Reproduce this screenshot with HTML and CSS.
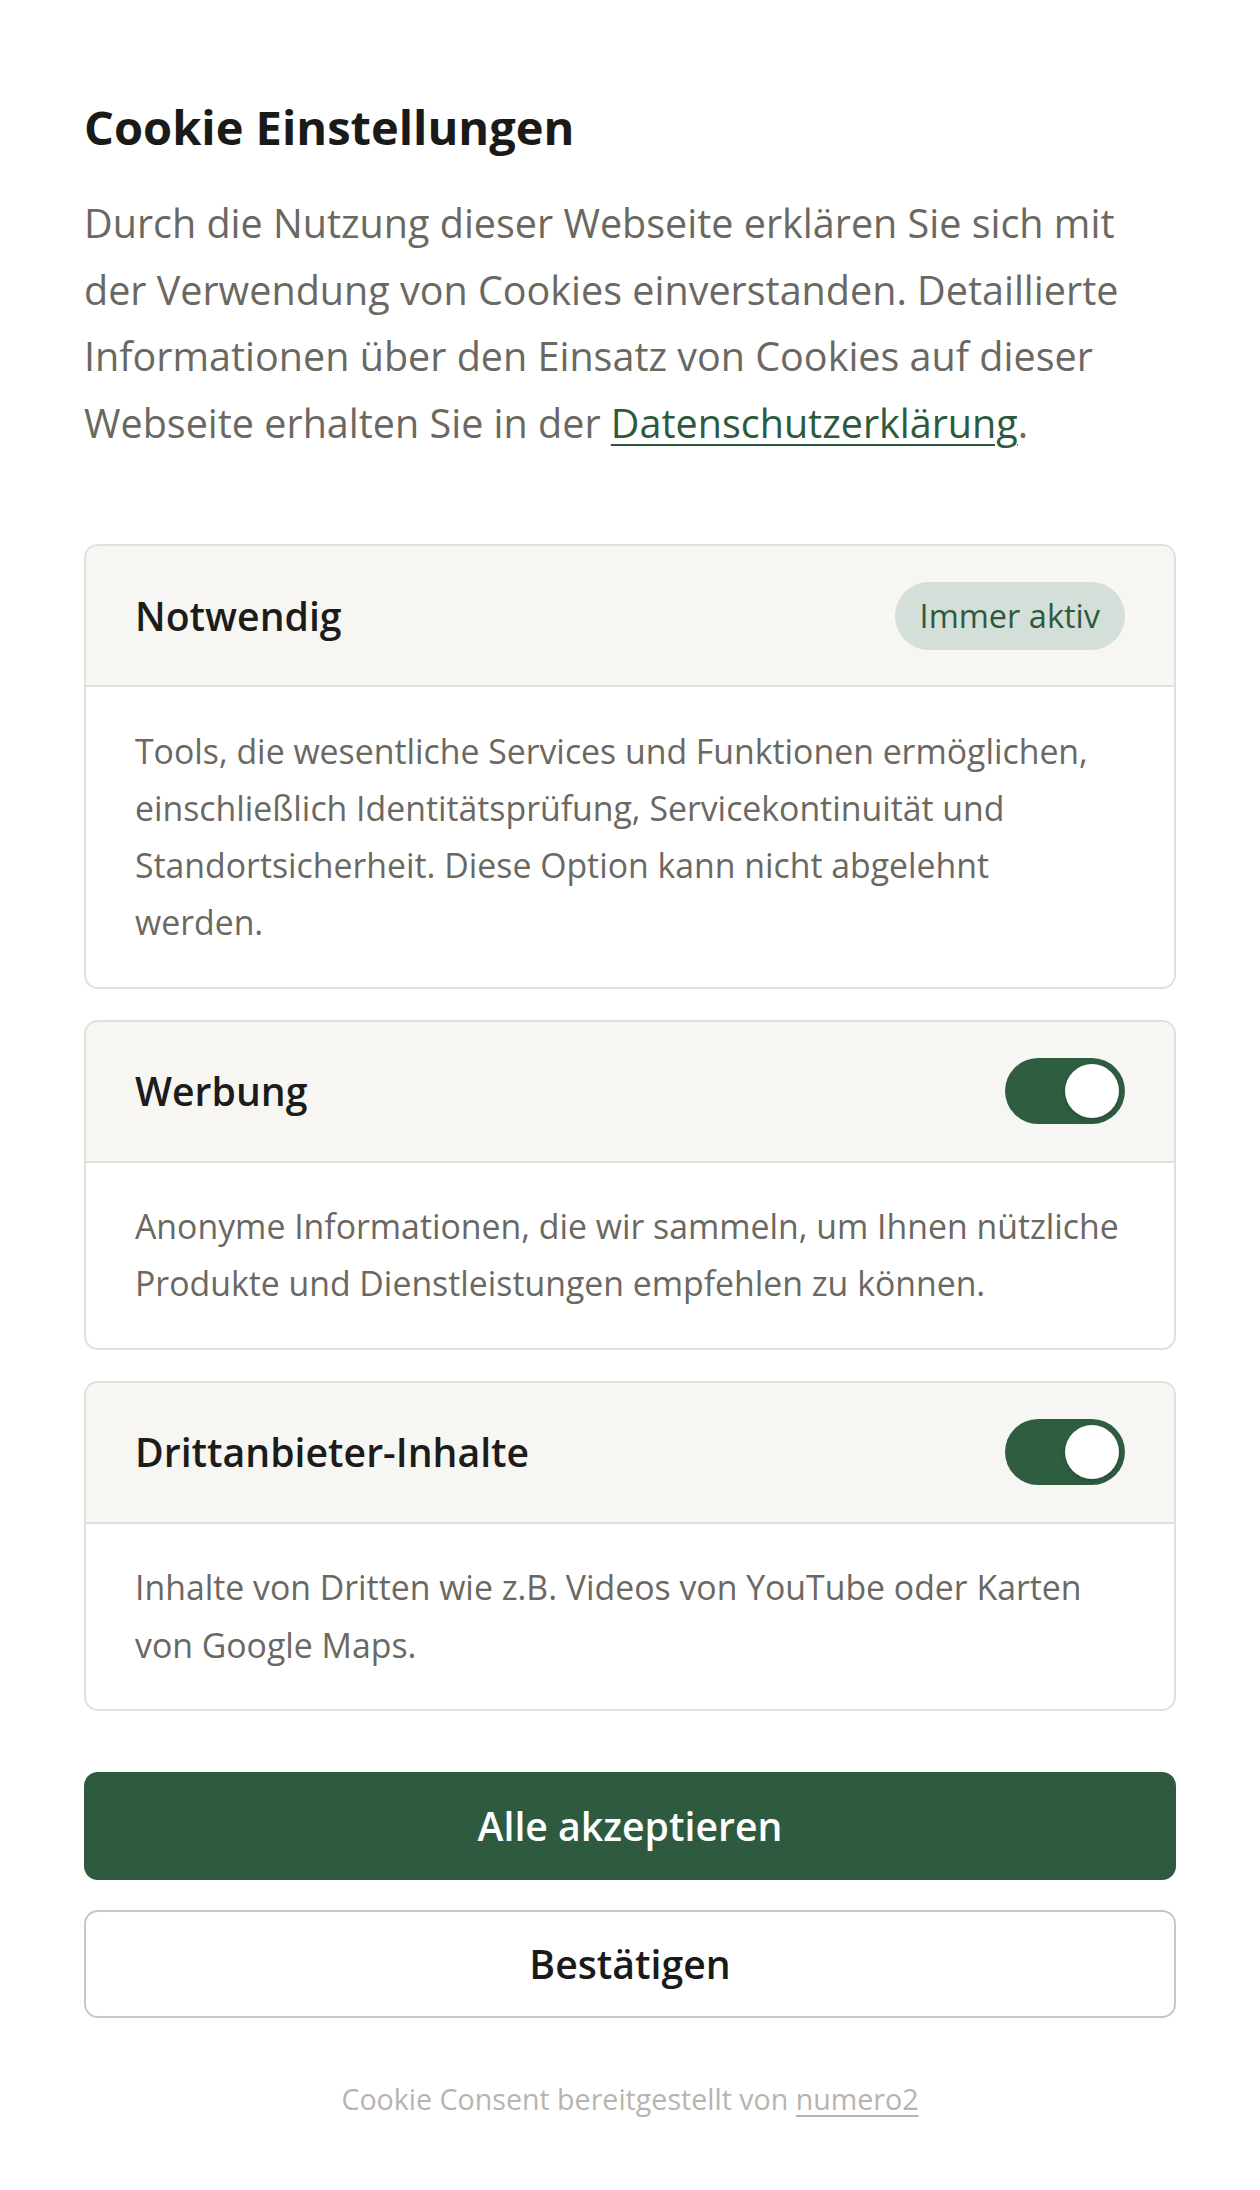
FILE: index.html
```html
<!DOCTYPE html>
<html lang="de">
<head>
<meta charset="utf-8">
<title>Cookie Einstellungen</title>
<link rel="stylesheet" href="styles.css">
</head>
<body>
<main class="page">
  <h1 class="title">Cookie Einstellungen</h1>
  <p class="intro">Durch die Nutzung dieser Webseite erklären Sie sich mit der Verwendung von Cookies einverstanden. Detaillierte Informationen über den Einsatz von Cookies auf dieser Webseite erhalten Sie in der <a class="link" href="#">Datenschutzerklärung</a>.</p>

  <section class="groups">
    <div class="card">
      <div class="card-head">
        <h2 class="card-title">Notwendig</h2>
        <span class="pill">Immer aktiv</span>
      </div>
      <div class="card-body">
        <p class="card-text">Tools, die wesentliche Services und Funktionen ermöglichen, einschließlich Identitätsprüfung, Servicekontinuität und Standortsicherheit. Diese Option kann nicht abgelehnt werden.</p>
      </div>
    </div>

    <div class="card">
      <div class="card-head">
        <h2 class="card-title">Werbung</h2>
        <span class="toggle"><span class="knob"></span></span>
      </div>
      <div class="card-body">
        <p class="card-text">Anonyme Informationen, die wir sammeln, um Ihnen nützliche Produkte und Dienstleistungen empfehlen zu können.</p>
      </div>
    </div>

    <div class="card">
      <div class="card-head">
        <h2 class="card-title">Drittanbieter-Inhalte</h2>
        <span class="toggle"><span class="knob"></span></span>
      </div>
      <div class="card-body">
        <p class="card-text">Inhalte von Dritten wie z.B. Videos von YouTube oder Karten von Google Maps.</p>
      </div>
    </div>
  </section>

  <div class="actions">
    <button class="btn btn-primary" type="button">Alle akzeptieren</button>
    <button class="btn btn-secondary" type="button">Bestätigen</button>
  </div>

  <p class="footer">Cookie Consent bereitgestellt von <a class="footer-link" href="#">numero2</a></p>
</main>
</body>
</html>
```

FILE: styles.css
```css
* {
  box-sizing: border-box;
}

html, body {
  margin: 0;
  padding: 0;
  background: #ffffff;
}

body {
  font-family: "Open Sans", "Noto Sans", sans-serif;
  color: #6b6862;
}

.page {
  padding: 99px 84px 0;
}

.title {
  margin: 0;
  font-size: 47px;
  line-height: 56px;
  font-weight: 700;
  color: #1a1a18;
}

.intro {
  margin: 35px 0 0;
  font-size: 39.5px;
  line-height: 66.6px;
  color: #6b6862;
}

.link {
  color: #2d5a3d;
  text-decoration: underline;
  text-decoration-thickness: 2px;
  text-underline-offset: 6px;
}

.groups {
  margin-top: 88px;
  display: flex;
  flex-direction: column;
  gap: 31px;
}

.card {
  border: 2px solid #e3e0dc;
  border-radius: 14px;
  overflow: hidden;
  background: #ffffff;
}

.card-head {
  display: flex;
  align-items: center;
  justify-content: space-between;
  padding: 35.5px 49px;
  background: #f7f6f3;
  border-bottom: 2px solid #e3e0dc;
  min-height: 141px;
}

.card-title {
  margin: 0;
  font-size: 39.2px;
  line-height: 54px;
  font-weight: 600;
  color: #1c1c1a;
}

.pill {
  display: inline-flex;
  align-items: center;
  height: 68px;
  padding: 0 25px;
  border-radius: 34px;
  background: #d5dfd9;
  color: #2d5a3d;
  font-size: 32.5px;
  font-weight: 500;
}

.toggle {
  position: relative;
  display: block;
  width: 120px;
  height: 66px;
  border-radius: 33px;
  background: #2e5d40;
}

.knob {
  position: absolute;
  top: 6px;
  right: 6px;
  width: 54px;
  height: 54px;
  border-radius: 50%;
  background: #ffffff;
  box-shadow: 0 2px 4px rgba(0, 0, 0, 0.18);
}

.card-body {
  padding: 35.5px 49px;
}

.card-text {
  margin: 0;
  font-size: 33.8px;
  line-height: 57.1px;
  color: #6b6862;
}

.actions {
  margin-top: 61px;
  display: flex;
  flex-direction: column;
  gap: 30px;
}

.btn {
  display: block;
  width: 100%;
  padding: 19px 20px;
  border-radius: 14px;
  font-family: "Open Sans", "Noto Sans", sans-serif;
  font-size: 39.2px;
  line-height: 66px;
  font-weight: 600;
  cursor: pointer;
}

.btn-primary {
  background: #2e5b3f;
  border: 2px solid #2e5b3f;
  color: #ffffff;
}

.btn-secondary {
  background: #ffffff;
  border: 2px solid #cbc8c4;
  color: #1a1a18;
}

.footer {
  margin: 58px 0 0;
  text-align: center;
  font-size: 28.6px;
  line-height: 46px;
  color: #b7b4af;
}

.footer-link {
  color: #b7b4af;
  text-decoration: underline;
  text-decoration-thickness: 2px;
  text-underline-offset: 5px;
}
```
